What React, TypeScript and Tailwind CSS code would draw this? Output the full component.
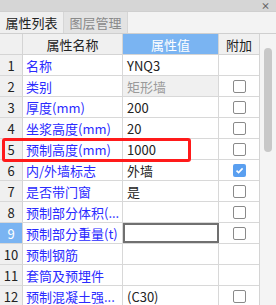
const ROWS = [
  { n: "1", name: "名称", value: "YNQ3", box: false },
  { n: "2", name: "类别", value: "矩形墙", box: true, disabled: true },
  { n: "3", name: "厚度(mm)", value: "200", box: true },
  { n: "4", name: "坐浆高度(mm)", value: "20", box: true },
  { n: "5", name: "预制高度(mm)", value: "1000", box: true },
  { n: "6", name: "内/外墙标志", value: "外墙", box: true, checked: true },
  { n: "7", name: "是否带门窗", value: "是", box: true },
  { n: "8", name: "预制部分体积(...", value: "", box: true },
  { n: "9", name: "预制部分重量(t)", value: "", box: true, active: true },
  { n: "10", name: "预制钢筋", value: "", box: false },
  { n: "11", name: "套筒及预埋件", value: "", box: false },
  { n: "12", name: "预制混凝土强...", value: "(C30)", box: true },
];

const Check = ({ checked }: { checked?: boolean }) =>
  checked ? (
    <div className="w-[13px] h-[13px] rounded-[2px] bg-[#5a9ff0] flex items-center justify-center">
      <svg width="9" height="9" viewBox="0 0 9 9">
        <path d="M1.5 4.6 L3.6 6.6 L7.6 2.4" stroke="white" strokeWidth="1.6" fill="none" />
      </svg>
    </div>
  ) : (
    <div className="w-[13px] h-[13px] rounded-[2px] border border-[#8a8a8a] bg-white" />
  );

export default function App() {
  return (
    <div
      className="w-[276px] h-[305px] overflow-hidden bg-white text-[13px] text-[#222] relative"
      style={{ fontFamily: '"Noto Sans CJK SC", "Microsoft YaHei", sans-serif' }}
    >
      <div className="h-[11px] bg-[#d6d6d6] flex items-center justify-end pr-[6px]">
        <span className="text-[9px] leading-none text-[#666] font-bold">×</span>
      </div>
      <div className="h-[23px] bg-[#f3f3f3] border-t border-b border-[#cfcfcf] flex">
        <div className="w-[64px] flex items-center justify-center bg-[#efefef] border-r border-[#d6d6d6] text-[#222] leading-none">
          属性列表
        </div>
        <div className="w-[64px] flex items-center justify-center bg-[#e3e3e3] border-r border-[#d6d6d6] text-[#8a8a8a] leading-none">
          图层管理
        </div>
      </div>
      <div className="flex">
        <div className="w-[259px]">
          <div className="flex h-[21px] border-b border-[#d4d4d4] leading-none">
            <div className="w-[23px] bg-[#f0f0f0] border-r border-[#d4d4d4]" />
            <div className="w-[100px] bg-[#f0f0f0] border-r border-[#d4d4d4] flex items-center justify-center">
              属性名称
            </div>
            <div className="w-[96px] bg-[#7ab4f2] border-r border-[#d4d4d4] flex items-center justify-center text-white">
              属性值
            </div>
            <div className="w-[40px] bg-[#f0f0f0] flex items-center justify-center">附加</div>
          </div>
          {ROWS.map((r) => (
            <div key={r.n} className="flex h-[21px] border-b border-[#d8d8d8] leading-none">
              <div
                className={
                  r.active
                    ? "w-[23px] bg-[#7ab4f2] text-white border-r border-[#d4d4d4] flex items-center justify-center"
                    : "w-[23px] bg-[#f0f0f0] border-r border-[#d4d4d4] flex items-center justify-center"
                }
              >
                {r.n}
              </div>
              <div className="w-[100px] border-r border-[#d8d8d8] flex items-center pl-[3px] text-[#2a2aff] whitespace-nowrap overflow-hidden">
                {r.name}
              </div>
              <div
                className={
                  r.disabled
                    ? "w-[96px] bg-[#f0f0f0] border-r border-[#d8d8d8] flex items-center pl-[4px] text-[#9a9a9a]"
                    : r.active
                    ? "w-[96px] border-2 border-[#707070] bg-white flex items-center pl-[4px]"
                    : "w-[96px] border-r border-[#d8d8d8] flex items-center pl-[4px]"
                }
              >
                {r.value}
              </div>
              <div className="w-[40px] flex items-center justify-center">
                {r.box && <Check checked={r.checked} />}
              </div>
            </div>
          ))}
        </div>
        <div className="w-[17px] bg-[#f4f4f4] border-l border-[#d4d4d4] flex justify-center pt-[14px]">
          <div className="w-[8px] h-[104px] rounded-full bg-[#c8c8c8]" />
        </div>
      </div>
      <div className="absolute left-[2px] top-[138px] w-[189px] h-[24px] border-[3px] border-[#ff1a1a] rounded-[3px]" />
    </div>
  );
}
